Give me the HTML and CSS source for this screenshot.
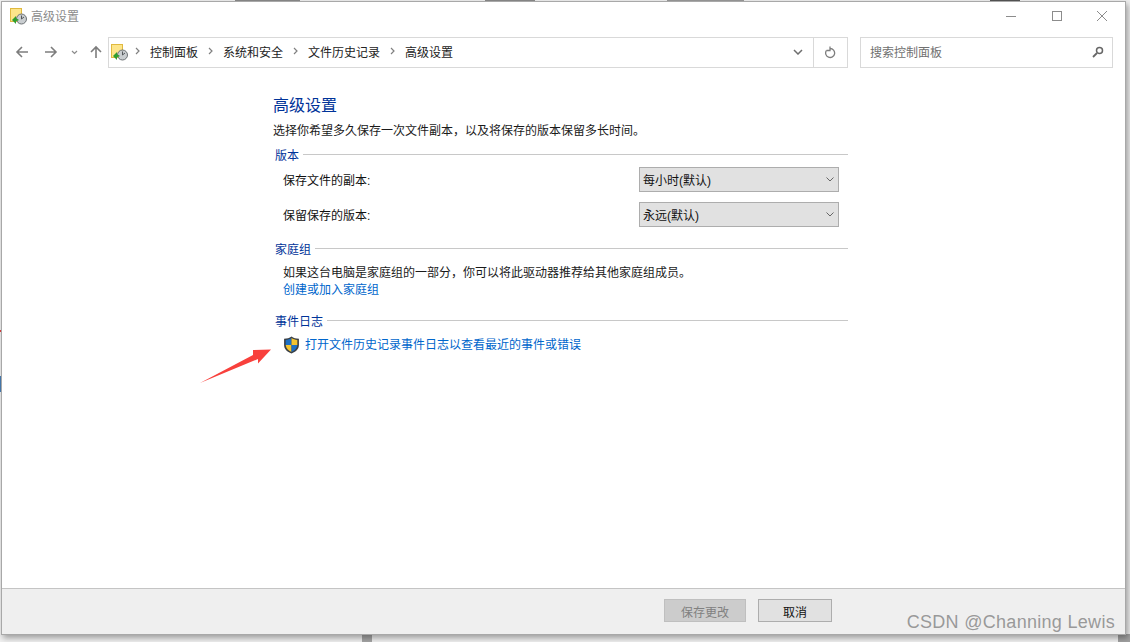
FILE: index.html
```html
<!DOCTYPE html>
<html>
  <head>
    <title>高级设置</title>
    <meta name="viewport" content="width=device-width, initial-scale=1.0" />
    <link rel="stylesheet" href="styles.css">
  </head>
  <body>
    <!-- bits of the desktop showing round the window -->
    <div class="behind top-a"></div>
    <div class="behind top-b"></div>
    <div class="behind top-c"></div>
    <div class="behind top-d"></div>
    <div class="behind left-red"></div>
    <div class="behind left-blue"></div>
    <div class="behind bottom-a"></div>
    <div class="behind bottom-b"></div>

    <div class="window">
      <div class="titlebar">
        <div class="title-left">
          <svg class="folder-icon" width="17" height="17" viewBox="0 0 17 17">
            <rect x="0.5" y="0.5" width="11" height="13" fill="#fde58a" stroke="#e0b93f" />
            <circle cx="11.500" cy="11" r="5" fill="#c9cdd0" stroke="#6d7275" />
            <path d="M11.500 7.500v3.500l2.500-2" fill="none" stroke="#55595c" />
            <path d="M2 12l4-4v2.500c1 0 2 .5 3 1.500-1 .5-2 1-3 1V16z" fill="#2f9e2f" />
          </svg>
          <span class="title-text">高级设置</span>
        </div>
        <div class="win-buttons">
          <svg width="12" height="12" viewBox="0 0 12 12"><path d="M1 6.500h10" stroke="#8c8c8c" fill="none" /></svg>
          <svg width="12" height="12" viewBox="0 0 12 12"><rect x="1.500" y="1.500" width="9" height="9" stroke="#8c8c8c" fill="none" /></svg>
          <svg width="12" height="12" viewBox="0 0 12 12"><path d="M1 1l10 10M11 1l-10 10" stroke="#8c8c8c" fill="none" /></svg>
        </div>
      </div>

      <div class="navbar">
        <div class="nav-buttons">
          <svg width="14" height="14" viewBox="0 0 14 14"><path d="M13 7H2M7 2L2 7l5 5" stroke="#7d7d7d" stroke-width="1.600" fill="none" /></svg>
          <svg width="14" height="14" viewBox="0 0 14 14"><path d="M1 7h11M7 2l5 5-5 5" stroke="#7d7d7d" stroke-width="1.600" fill="none" /></svg>
          <svg width="7" height="5" viewBox="0 0 7 5"><path d="M1 1l2.500 2.500L6 1" stroke="#8c8c8c" stroke-width="1.200" fill="none" /></svg>
          <svg width="14" height="14" viewBox="0 0 14 14"><path d="M7 13V2M2 7l5-5 5 5" stroke="#7d7d7d" stroke-width="1.600" fill="none" /></svg>
        </div>
        <div class="address">
          <svg class="folder-icon" width="17" height="17" viewBox="0 0 17 17">
            <rect x="0.5" y="0.5" width="11" height="13" fill="#fde58a" stroke="#e0b93f" />
            <circle cx="11.500" cy="11" r="5" fill="#c9cdd0" stroke="#6d7275" />
            <path d="M11.500 7.500v3.500l2.500-2" fill="none" stroke="#55595c" />
            <path d="M2 12l4-4v2.500c1 0 2 .5 3 1.500-1 .5-2 1-3 1V16z" fill="#2f9e2f" />
          </svg>
          <div class="crumbs">
            <svg class="sep" width="5" height="8" viewBox="0 0 5 8"><path d="M1 1l3 3-3 3" stroke="#808080" stroke-width="1.200" fill="none" /></svg>
            <span>控制面板</span>
            <svg class="sep" width="5" height="8" viewBox="0 0 5 8"><path d="M1 1l3 3-3 3" stroke="#808080" stroke-width="1.200" fill="none" /></svg>
            <span>系统和安全</span>
            <svg class="sep" width="5" height="8" viewBox="0 0 5 8"><path d="M1 1l3 3-3 3" stroke="#808080" stroke-width="1.200" fill="none" /></svg>
            <span>文件历史记录</span>
            <svg class="sep" width="5" height="8" viewBox="0 0 5 8"><path d="M1 1l3 3-3 3" stroke="#808080" stroke-width="1.200" fill="none" /></svg>
            <span>高级设置</span>
          </div>
          <div class="address-drop">
            <svg width="10" height="6" viewBox="0 0 10 6"><path d="M1 1l4 4 4-4" stroke="#6e6e6e" stroke-width="1.500" fill="none" /></svg>
          </div>
          <div class="address-refresh">
            <svg width="12" height="13" viewBox="0 0 12 13"><path d="M5 2.500a4.500 4.500 0 1 1-3.600 2M5 0.500v4h-3.500" stroke="#7d7d7d" stroke-width="1.300" fill="none" /></svg>
          </div>
        </div>
        <div class="search">
          <span>搜索控制面板</span>
          <svg width="12" height="12" viewBox="0 0 12 12"><circle cx="7.500" cy="4.500" r="3" stroke="#666" stroke-width="1.500" fill="none" /><path d="M5 7l-4 4" stroke="#666" stroke-width="1.800" /></svg>
        </div>
      </div>

      <div class="content">
        <div class="panel">
          <h1>高级设置</h1>
          <p class="intro">选择你希望多久保存一次文件副本，以及将保存的版本保留多长时间。</p>

          <div class="group-head"><span>版本</span></div>
          <div class="field">
            <label>保存文件的副本:</label>
            <div class="select">
              <span>每小时(默认)</span>
              <svg width="8" height="5" viewBox="0 0 8 5"><path d="M0.500 0.500l3.500 3.500 3.500-3.500" stroke="#666" fill="none" /></svg>
            </div>
          </div>
          <div class="field">
            <label>保留保存的版本:</label>
            <div class="select">
              <span>永远(默认)</span>
              <svg width="8" height="5" viewBox="0 0 8 5"><path d="M0.500 0.500l3.500 3.500 3.500-3.500" stroke="#666" fill="none" /></svg>
            </div>
          </div>

          <div class="group-head"><span>家庭组</span></div>
          <div class="group-body">
            <p>如果这台电脑是家庭组的一部分，你可以将此驱动器推荐给其他家庭组成员。</p>
            <a href="#">创建或加入家庭组</a>
          </div>

          <div class="group-head"><span>事件日志</span></div>
          <div class="event-row">
            <svg width="17" height="18" viewBox="0 0 16 17">
              <path d="M8 0.500c2 1.500 4 2 7 2v6c0 4-3 6.500-7 8-4-1.500-7-4-7-8v-6c3 0 5-.5 7-2z" fill="#3b3f44" />
              <path d="M8 2v6.500H2.500V3.700c2.200 0 4-.5 5.500-1.700z" fill="#1c6fc4" />
              <path d="M8 2c1.500 1.200 3.300 1.700 5.500 1.700v4.800H8z" fill="#f4c430" />
              <path d="M8 8.500v6.500c-3-1.200-5.300-3.200-5.500-6.500z" fill="#f4c430" />
              <path d="M8 8.500h5.500c-.2 3.300-2.500 5.300-5.500 6.500z" fill="#1c6fc4" />
            </svg>
            <a href="#">打开文件历史记录事件日志以查看最近的事件或错误</a>
          </div>
        </div>
      </div>

      <div class="footer">
        <button class="btn btn-disabled">保存更改</button>
        <button class="btn">取消</button>
      </div>
    </div>

    <svg class="arrow" width="74" height="42" viewBox="0 0 74 42">
      <path d="M0 39L53 11V6l18-.5L58 19.500V15z" fill="#f8403c" />
    </svg>
    <div class="watermark">CSDN @Channing Lewis</div>
  </body>
</html>
```

FILE: styles.css
```css
* {
  box-sizing: border-box;
}
body {
  margin: 0;
  height: 642px;
  overflow: hidden;
  background: #f0f0f0;
  color: #1a1a1a;
  font-family: "Liberation Sans", "Noto Sans CJK SC", sans-serif;
  font-size: 12px;
}
.behind {
  position: absolute;
}
.top-a {
  left: 235px;
  top: 0;
  width: 65px;
  height: 1px;
  background: #8a8a8a;
}
.top-b {
  left: 485px;
  top: 0;
  width: 50px;
  height: 1px;
  background: #8a8a8a;
}
.top-c {
  left: 667px;
  top: 0;
  width: 77px;
  height: 1px;
  background: #999;
}
.top-d {
  left: 990px;
  top: 0;
  width: 30px;
  height: 1px;
  background: #555;
}
.left-red {
  left: 0;
  top: 330px;
  width: 1px;
  height: 2px;
  background: #e04040;
}
.left-blue {
  left: 0;
  top: 376px;
  width: 1px;
  height: 16px;
  background: #4a7fb5;
}
.bottom-a {
  left: 362px;
  top: 634px;
  width: 10px;
  height: 8px;
  background: #a5a5a5;
}
.bottom-b {
  left: 1118px;
  top: 634px;
  width: 12px;
  height: 8px;
  background: #a0a0a0;
}
.window {
  position: relative;
  margin: 1px 0 0 1px;
  width: 1125px;
  height: 634px;
  background: white;
  border: 1px solid #a8a8a8;
  box-shadow: 2px 3px 6px rgba(0, 0, 0, 0.35);
  display: flex;
  flex-direction: column;
}
.titlebar {
  height: 28px;
  display: flex;
  justify-content: space-between;
  align-items: center;
  padding: 0 0 0 8px;
}
.title-left {
  display: flex;
  align-items: center;
  gap: 4px;
}
.title-text {
  color: #8c8c8c;
  padding-bottom: 2px;
}
.win-buttons {
  display: flex;
  gap: 33.500px;
  padding-right: 17px;
}
.navbar {
  height: 30px;
  margin-top: 7px;
  display: flex;
  align-items: center;
  padding: 0 12px 0 0;
}
.nav-buttons {
  width: 106px;
  display: flex;
  align-items: center;
  gap: 15px;
  padding-left: 13px;
}
.nav-buttons svg:nth-child(3) {
  margin: 0 -4px 0 -2px;
}
.address {
  width: 740px;
  height: 31px;
  border: 1px solid #d9d9d9;
  display: flex;
  align-items: center;
  padding-left: 2px;
}
.crumbs {
  flex: 1;
  display: flex;
  align-items: center;
  gap: 10px;
  padding: 0 0 2px 7px;
  color: #222;
}
.address-drop {
  width: 31px;
  display: flex;
  justify-content: center;
}
.address-refresh {
  width: 34px;
  height: 29px;
  border-left: 1px solid #d9d9d9;
  display: flex;
  align-items: center;
  justify-content: center;
}
.search {
  margin-left: 12px;
  flex: 1;
  height: 31px;
  border: 1px solid #d9d9d9;
  display: flex;
  align-items: center;
  justify-content: space-between;
  padding: 0 8px 0 9px;
  color: #707070;
}
.search span {
  padding-bottom: 2px;
}
.content {
  flex: 1;
}
.panel {
  width: 575px;
  margin-left: 271px;
  padding-top: 29px;
}
h1 {
  margin: 0;
  font-size: 16px;
  font-weight: normal;
  line-height: 20px;
  color: #003399;
}
.intro {
  margin: 6px 0 0;
  line-height: 18px;
}
.group-head {
  display: flex;
  align-items: center;
  gap: 4px;
  padding-left: 2px;
  height: 16px;
  margin-top: 13px;
  color: #003399;
}
.intro + .group-head {
  margin-top: 6px;
}
.group-head::after {
  content: "";
  flex: 1;
  height: 1px;
  background: #c8c8c8;
}
.field {
  display: flex;
  justify-content: space-between;
  align-items: center;
  padding: 0 9px 0 10px;
  height: 26px;
  margin-top: 9px;
}
.group-head + .field {
  margin-top: 4px;
}
.select {
  width: 200px;
  height: 25px;
  background: #e1e1e1;
  border: 1px solid #adadad;
  display: flex;
  justify-content: space-between;
  align-items: center;
  padding: 0 4px 0 3px;
  color: #111;
}
label {
  color: #111;
}
.group-body {
  padding: 9px 0 0 10px;
}
.group-body p {
  margin: 0 0 -1px;
  line-height: 17px;
}
a {
  color: #0066cc;
  text-decoration: none;
  line-height: 18px;
}
.group-body a {
  display: block;
}
.event-row {
  display: flex;
  align-items: center;
  gap: 5px;
  padding: 8px 0 0 10px;
}
.footer {
  height: 46px;
  background: #efefef;
  border-top: 1px solid #c4c4c4;
  display: flex;
  justify-content: flex-end;
  gap: 12px;
  padding: 10px 293px 0 0;
}
.btn {
  width: 74px;
  height: 23px;
  padding: 1px 0 0;
  background: #e1e1e1;
  border: 1px solid #adadad;
  font: inherit;
  color: #111;
}
.btn-disabled {
  width: 82px;
  background: #cccccc;
  border-color: #bfbfbf;
  color: #808080;
}
.arrow {
  position: absolute;
  left: 200px;
  top: 344px;
}
.watermark {
  position: absolute;
  right: 15px;
  top: 612px;
  font-size: 18px;
  letter-spacing: 0.3px;
  font-family: "Liberation Sans", sans-serif;
  color: rgba(130, 130, 130, 0.8);
}
```
